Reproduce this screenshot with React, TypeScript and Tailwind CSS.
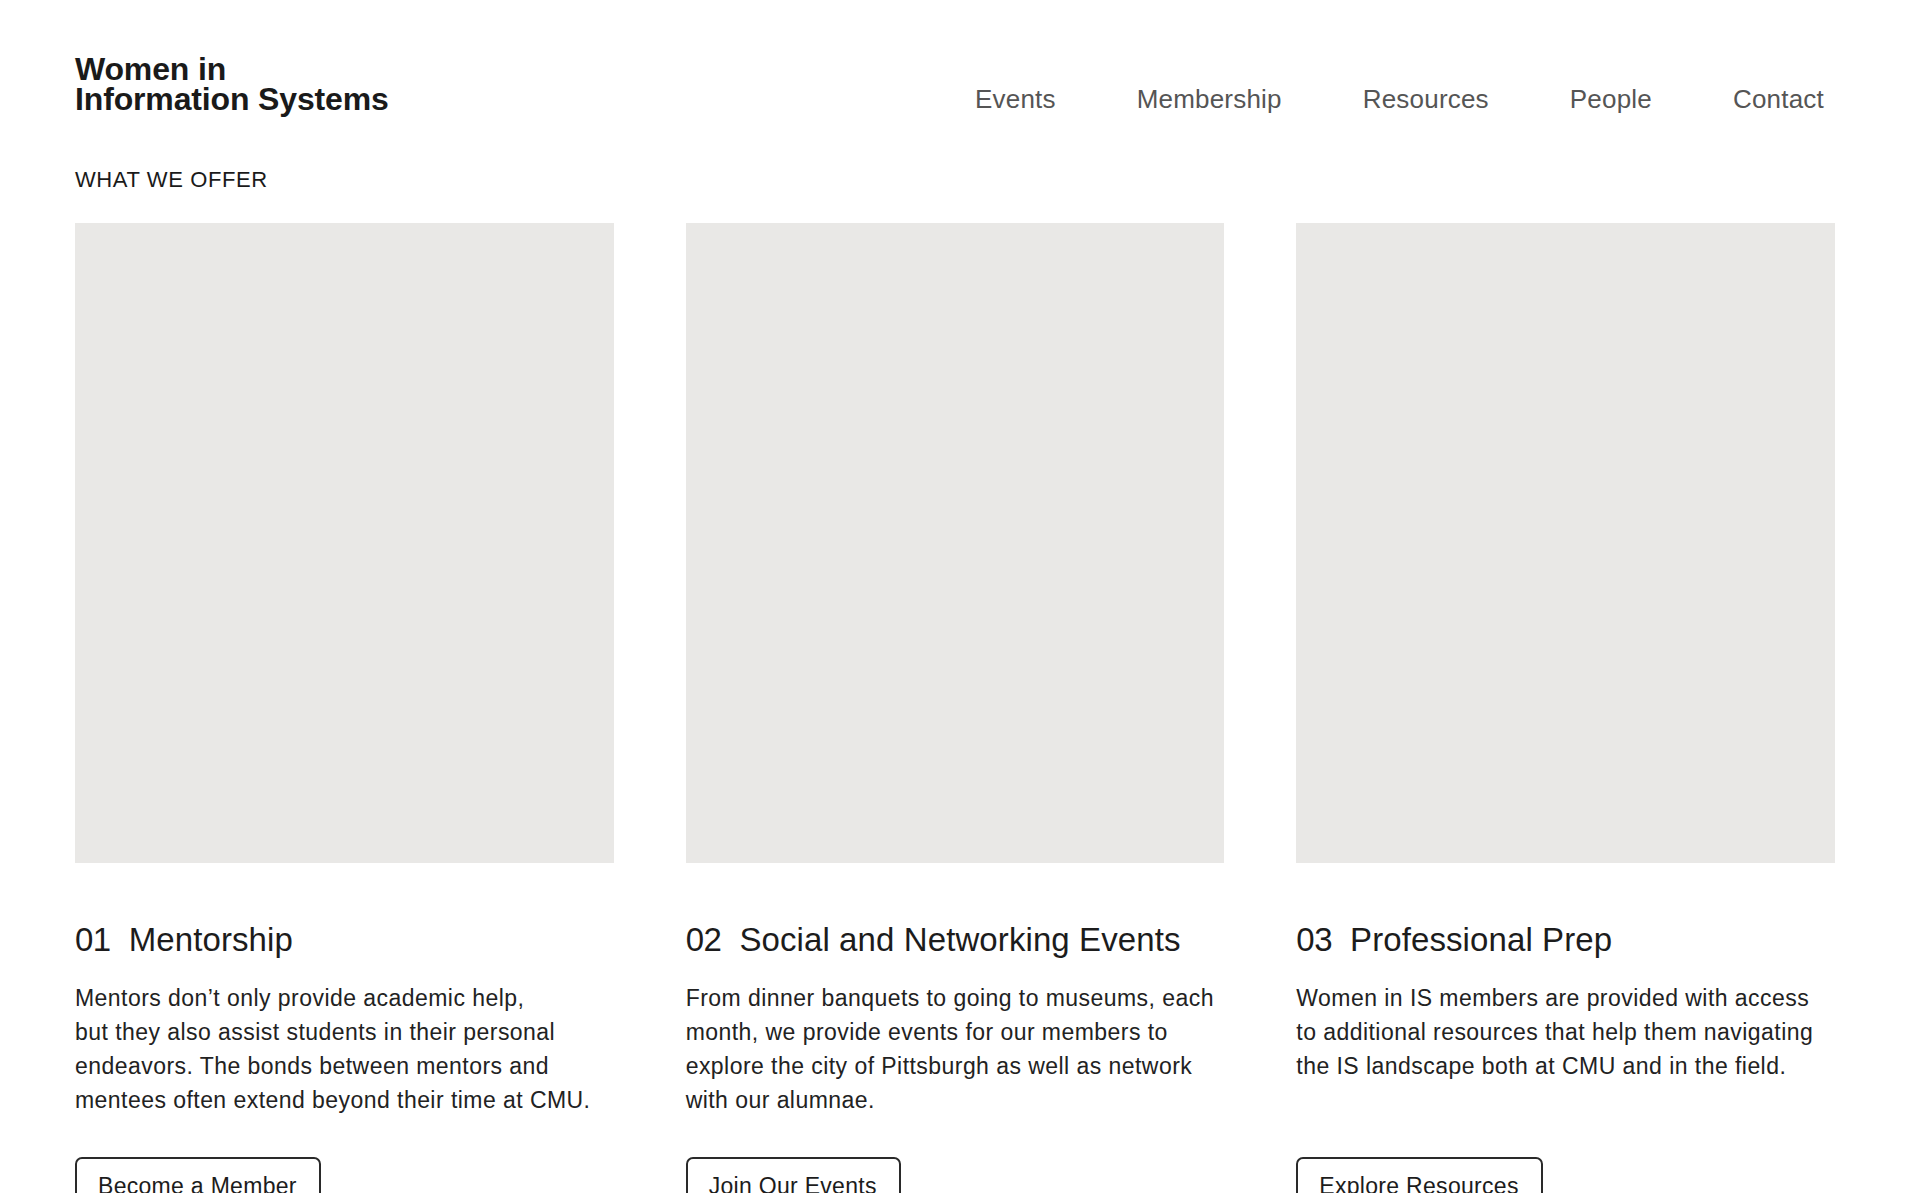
import React from "react";

const cards = [
  {
    num: "01",
    title: "Mentorship",
    lines: [
      "Mentors don’t only provide academic help,",
      "but they also assist students in their personal",
      "endeavors. The bonds between mentors and",
      "mentees often extend beyond their time at CMU.",
    ],
    button: "Become a Member",
  },
  {
    num: "02",
    title: "Social and Networking Events",
    lines: [
      "From dinner banquets to going to museums, each",
      "month, we provide events for our members to",
      "explore the city of Pittsburgh as well as network",
      "with our alumnae.",
    ],
    button: "Join Our Events",
  },
  {
    num: "03",
    title: "Professional Prep",
    lines: [
      "Women in IS members are provided with access",
      "to additional resources that help them navigating",
      "the IS landscape both at CMU and in the field.",
    ],
    button: "Explore Resources",
  },
];

const nav = ["Events", "Membership", "Resources", "People", "Contact"];

export default function App() {
  return (
    <div
      className="min-h-screen bg-white text-[#1b1b1b]"
      style={{ fontFamily: '"Liberation Sans", Arial, Helvetica, sans-serif' }}
    >
      <header className="flex items-end justify-between px-[75px] pt-[54px]">
        <div className="text-[32px] font-bold leading-[30px] tracking-[-0.15px] text-[#1a1a1a]">
          <div>Women in</div>
          <div>Information Systems</div>
        </div>
        <nav className="mr-[11px] flex gap-[81px] text-[26px] leading-[30px] tracking-[0.2px] text-[#555555]">
          {nav.map((n) => (
            <a key={n} href="#" className="block">
              {n}
            </a>
          ))}
        </nav>
      </header>

      <main className="px-[75px] pb-[80px]">
        <h2 className="mt-[53px] text-[22px] leading-[26px] tracking-[0.6px] text-[#1a1a1a]">
          WHAT WE OFFER
        </h2>
        <div className="mt-[30px] grid grid-cols-3 gap-[72px]">
          {cards.map((c) => (
            <div key={c.num} className="flex flex-col">
              <div className="h-[640px] w-full bg-[#e9e8e6]" />
              <h3 className="mt-[57px] flex gap-[18px] text-[33px] leading-[40px] tracking-[0.1px] text-[#1c1c1c]">
                <span className="tracking-[-0.5px]">{c.num}</span>
                <span>{c.title}</span>
              </h3>
              <p className="mt-[21px] flex-1 text-[23px] leading-[34px] tracking-[0.45px] text-[#222222]">
                {c.lines.map((l, i) => (
                  <span key={i} className="block whitespace-nowrap">
                    {l}
                  </span>
                ))}
              </p>
              <div className="mt-[40px]">
                <button className="rounded-[7px] border-2 border-[#2a2a2a] bg-white pb-[10px] pl-[21px] pr-[22px] pt-[10px] text-[23px] leading-[34px] tracking-[0.3px] text-[#1c1c1c]">
                  {c.button}
                </button>
              </div>
            </div>
          ))}
        </div>
      </main>
    </div>
  );
}
